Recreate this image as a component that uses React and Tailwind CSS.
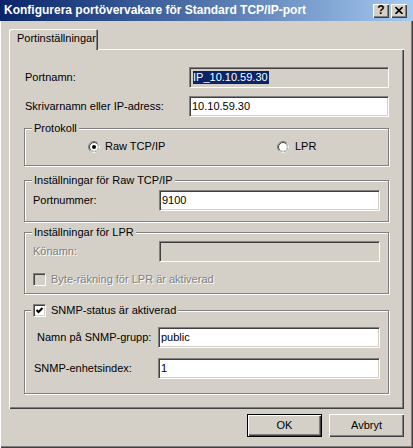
import React from "react";

const sunken =
  "border border-t-[#808080] border-l-[#808080] border-b-white border-r-white shadow-[inset_1px_1px_0_#404040,inset_-1px_-1px_0_#d4d0c8]";
const raised =
  "shadow-[inset_1px_1px_0_#fff,inset_-1px_-1px_0_#404040,inset_-2px_-2px_0_#808080]";
const etched =
  "relative border border-[#808080] shadow-[1px_1px_0_#fff,inset_1px_1px_0_#fff]";
const disabledText = "text-[#808080] [text-shadow:1px_1px_0_#fff]";

const Radio = ({ checked }) => (
  <svg width="12" height="12" viewBox="0 0 12 12">
    <circle cx="6" cy="6" r="5.5" fill="none" stroke="#808080" />
    <path d="M9.89 2.11 A5.5 5.5 0 0 1 2.11 9.89" fill="none" stroke="#fff" />
    <circle cx="6" cy="6" r="4.5" fill="#fff" stroke="#404040" />
    <path d="M9.18 2.82 A4.5 4.5 0 0 1 2.82 9.18" fill="none" stroke="#d4d0c8" />
    {checked && <circle cx="6" cy="6" r="2" fill="#000" />}
  </svg>
);

const Checkbox = ({ checked, disabled }) => (
  <div
    className={`w-[13px] h-[13px] flex items-center justify-center ${sunken} ${
      disabled ? "bg-[#d4d0c8]" : "bg-white"
    }`}
  >
    {checked && (
      <svg width="9" height="9" viewBox="0 0 9 9">
        <polyline
          points="1.5,4 3.5,6 7.5,2"
          fill="none"
          stroke="#000"
          strokeWidth="2"
        />
      </svg>
    )}
  </div>
);

const Field = ({ value, width, disabled }) => (
  <div
    className={`${width} h-[21px] flex items-center pl-[2px] ${sunken} ${
      disabled ? "bg-[#d4d0c8]" : "bg-white"
    }`}
  >
    {value}
  </div>
);

const Legend = ({ children, left = "left-[7px]" }) => (
  <div
    className={`absolute ${left} top-[-7px] h-[13px] flex items-center gap-[5px] px-[2px] bg-[#d4d0c8] leading-[13px]`}
  >
    {children}
  </div>
);

export default function App() {
  return (
    <div className="w-[413px] h-[448px] bg-[#d4d0c8] flex flex-col text-[11px] leading-[13px] text-black font-['Liberation_Sans',Arial,sans-serif] shadow-[inset_1px_0_0_#fff,inset_-1px_-1px_0_#404040,inset_-2px_-2px_0_#808080]">
      {/* Title bar */}
      <div className="h-[21px] shrink-0 flex items-center pl-[4px] pr-[6px] bg-gradient-to-r from-[#0a246a] to-[#a6caf0]">
        <span className="flex-1 font-bold text-[12px] text-white">
          Konfigurera portövervakare för Standard TCP/IP-port
        </span>
        <div className="flex gap-[2px]">
          <div
            className={`w-[16px] h-[14px] bg-[#d4d0c8] flex items-center justify-center font-bold text-[12px] ${raised}`}
          >
            ?
          </div>
          <div
            className={`w-[16px] h-[14px] bg-[#d4d0c8] flex items-center justify-center ${raised}`}
          >
            <svg width="8" height="7" viewBox="0 0 8 7">
              <path d="M0.5 0 L7.5 7 M7.5 0 L0.5 7" stroke="#000" strokeWidth="1.6" />
            </svg>
          </div>
        </div>
      </div>

      {/* Tabs */}
      <div className="px-[9px] pt-[8px]">
        <div
          className={`relative z-10 -mb-[1px] w-[89px] h-[21px] pl-[8px] pt-[3px] bg-[#d4d0c8] rounded-t-[2px] shadow-[inset_1px_1px_0_#fff,inset_-1px_0_0_#404040,inset_-2px_0_0_#808080]`}
        >
          Portinställningar
        </div>

        <div className={`h-[360px] pt-[18px] ${raised}`}>
          <div className="flex items-center pl-[16px]">
            <span className="w-[164px]">Portnamn:</span>
            <div className={`w-[200px] h-[21px] flex items-center pl-[3px] bg-[#d4d0c8] ${sunken}`}>
              <span className="bg-[#0a246a] text-white pr-[1px]">IP_10.10.59.30</span>
            </div>
          </div>
          <div className="flex items-center pl-[16px] mt-[8px]">
            <span className="w-[164px]">Skrivarnamn eller IP-adress:</span>
            <Field value="10.10.59.30" width="w-[200px]" />
          </div>

          {/* Protokoll */}
          <div className={`${etched} ml-[15px] w-[365px] h-[38px] mt-[11px]`}>
            <Legend>Protokoll</Legend>
            <div className="flex items-center pt-[11px] pl-[63px]">
              <div className="w-[189px] flex items-center gap-[5px]">
                <Radio checked />
                <span>Raw TCP/IP</span>
              </div>
              <div className="flex items-center gap-[6px]">
                <Radio />
                <span>LPR</span>
              </div>
            </div>
          </div>

          {/* Raw TCP/IP */}
          <div className={`${etched} ml-[15px] w-[365px] h-[42px] mt-[14px]`}>
            <Legend>Inställningar för Raw TCP/IP</Legend>
            <div className="flex items-center pt-[9px] pl-[8px]">
              <span className="w-[126px]">Portnummer:</span>
              <Field value="9100" width="w-[221px]" />
            </div>
          </div>

          {/* LPR */}
          <div className={`${etched} ml-[15px] w-[365px] h-[62px] mt-[10px]`}>
            <Legend>Inställningar för LPR</Legend>
            <div className="flex items-center pt-[8px] pl-[8px]">
              <span className={`w-[126px] ${disabledText}`}>Könamn:</span>
              <Field value="" width="w-[221px]" disabled />
            </div>
            <div className="flex items-center gap-[5px] pl-[8px] mt-[11px]">
              <Checkbox disabled />
              <span className={disabledText}>Byte-räkning för LPR är aktiverad</span>
            </div>
          </div>

          {/* SNMP */}
          <div className={`${etched} ml-[15px] w-[365px] h-[84px] mt-[16px]`}>
            <Legend left="left-[6px]">
              <Checkbox checked />
              <span>SNMP-status är aktiverad</span>
            </Legend>
            <div className="flex items-center pt-[16px] pl-[12px]">
              <span className="w-[121px]">Namn på SNMP-grupp:</span>
              <Field value="public" width="w-[222px]" />
            </div>
            <div className="flex items-center mt-[10px] pl-[9px]">
              <span className="w-[124px]">SNMP-enhetsindex:</span>
              <Field value="1" width="w-[222px]" />
            </div>
          </div>
        </div>
      </div>

      {/* Buttons */}
      <div className="flex justify-end gap-[7px] pr-[9px] mt-[5px]">
        <div className="w-[75px] h-[23px] border border-black">
          <div className={`w-full h-full flex items-center justify-center ${raised}`}>OK</div>
        </div>
        <div className={`w-[75px] h-[23px] flex items-center justify-center ${raised}`}>
          Avbryt
        </div>
      </div>
    </div>
  );
}
